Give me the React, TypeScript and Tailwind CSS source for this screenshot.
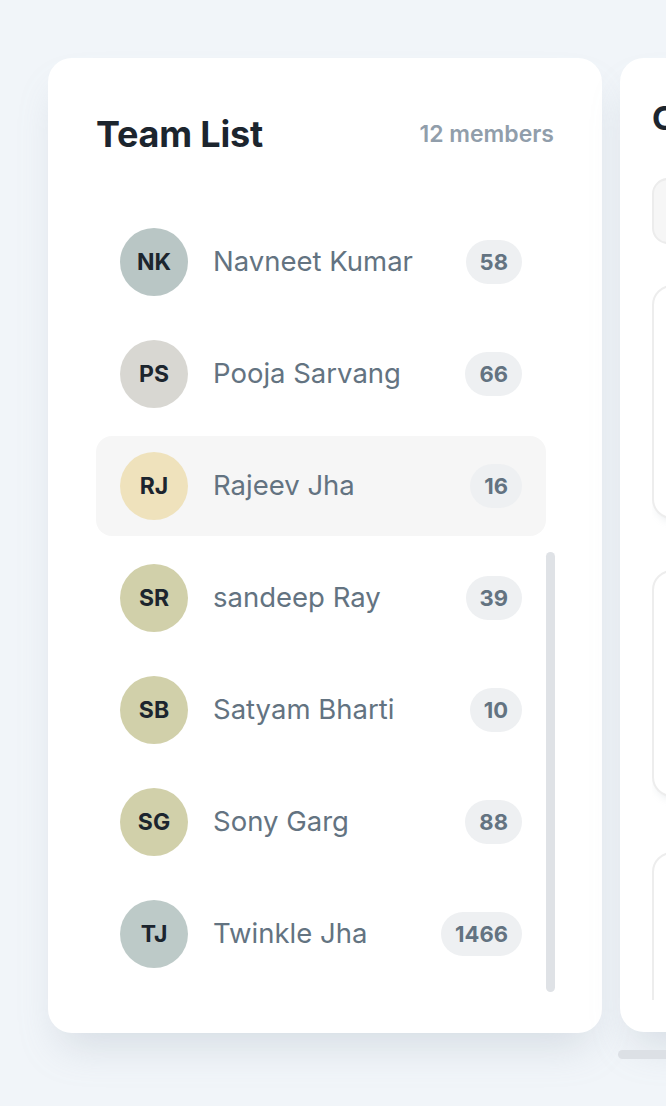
type Member = {
  initials: string;
  name: string;
  count: number;
  tint: string;
  active?: boolean;
};

const members: Member[] = [
  { initials: "NK", name: "Navneet Kumar", count: 58, tint: "bg-[#b9c6c5]" },
  { initials: "PS", name: "Pooja Sarvang", count: 66, tint: "bg-[#d8d7d2]" },
  { initials: "RJ", name: "Rajeev Jha", count: 16, tint: "bg-[#efe2bc]", active: true },
  { initials: "SR", name: "sandeep Ray", count: 39, tint: "bg-[#d1d0aa]" },
  { initials: "SB", name: "Satyam Bharti", count: 10, tint: "bg-[#d1d0aa]" },
  { initials: "SG", name: "Sony Garg", count: 88, tint: "bg-[#d1d0aa]" },
  { initials: "TJ", name: "Twinkle Jha", count: 1466, tint: "bg-[#bdcac8]" },
];

export default function App() {
  return (
    <div
      className="h-[1106px] w-[666px] overflow-hidden bg-[#f1f5f9]"
      style={{ fontFamily: "Inter, 'Noto Sans', sans-serif" }}
    >
      <div className="flex items-start gap-[18px] pl-[48px] pt-[58px]">
        <TeamList />
        <ChatColumn />
      </div>
    </div>
  );
}

function TeamList() {
  return (
    <div className="w-[554px] shrink-0 rounded-[24px] bg-white pb-[41px] pl-[48px] pr-[47px] pt-[48px] shadow-[0_24px_40px_-12px_rgba(145,158,171,0.28)]">
      <div className="flex h-[56px] items-center justify-between">
        <h2 className="text-[36px] font-bold leading-[56px] tracking-[-0.2px] text-[#1c252e]">
          Team List
        </h2>
        <span className="pr-[1px] text-[23px] font-semibold text-[#919eab]">
          12 members
        </span>
      </div>

      <div className="mt-[50px] flex items-start">
        <div className="flex w-[450px] flex-col gap-[12px]">
          {members.map((m) => (
            <MemberRow key={m.initials} m={m} />
          ))}
        </div>
        {/* list scrollbar, scrolled to the end */}
        <div className="w-[9px]">
          <div className="mt-[340px] h-[440px] rounded-full bg-[#dfe2e6]" />
        </div>
      </div>
    </div>
  );
}

function MemberRow({ m }: { m: Member }) {
  return (
    <div
      className={`flex h-[100px] items-center rounded-[16px] px-[24px] ${
        m.active ? "bg-[#f6f6f6]" : ""
      }`}
    >
      <div
        className={`flex h-[68px] w-[68px] shrink-0 items-center justify-center rounded-full text-[23px] font-bold text-[#1c252e] ${m.tint}`}
      >
        {m.initials}
      </div>
      <div className="ml-[25px] flex-1 text-[27.5px] text-[#637381]">{m.name}</div>
      <div className="flex h-[44px] items-center rounded-full bg-[#eef0f2] px-[14px] text-[22px] font-bold text-[#637381]">
        {m.count}
      </div>
    </div>
  );
}

function ChatColumn() {
  return (
    <div className="w-[480px] shrink-0">
      <div className="flex h-[974px] flex-col rounded-[24px] bg-white pb-[32px] pl-[32px] pt-[40px] shadow-[0_24px_40px_-12px_rgba(145,158,171,0.28)]">
        <h2 className="text-[33px] font-bold leading-[40px] text-[#1c252e]">
          Conversations
        </h2>
        <div className="flex-1 overflow-hidden">
          <div className="mt-[40px] h-[66px] rounded-[16px] border-2 border-[#ececec] bg-[#f6f6f6]" />
          <div className="mt-[41px] h-[234px] rounded-[20px] border-2 border-[#ededed] bg-white shadow-[0_6px_10px_-6px_rgba(145,158,171,0.3)]" />
          <div className="mt-[51px] h-[227px] rounded-[20px] border-2 border-[#ededed] bg-white shadow-[0_6px_10px_-6px_rgba(145,158,171,0.3)]" />
          <div className="mt-[55px] h-[220px] rounded-[20px] border-2 border-[#ededed] bg-white" />
        </div>
      </div>
      <div className="-ml-[2px] mt-[18px] h-[9px] rounded-full bg-[#dce0e5]" />
    </div>
  );
}
